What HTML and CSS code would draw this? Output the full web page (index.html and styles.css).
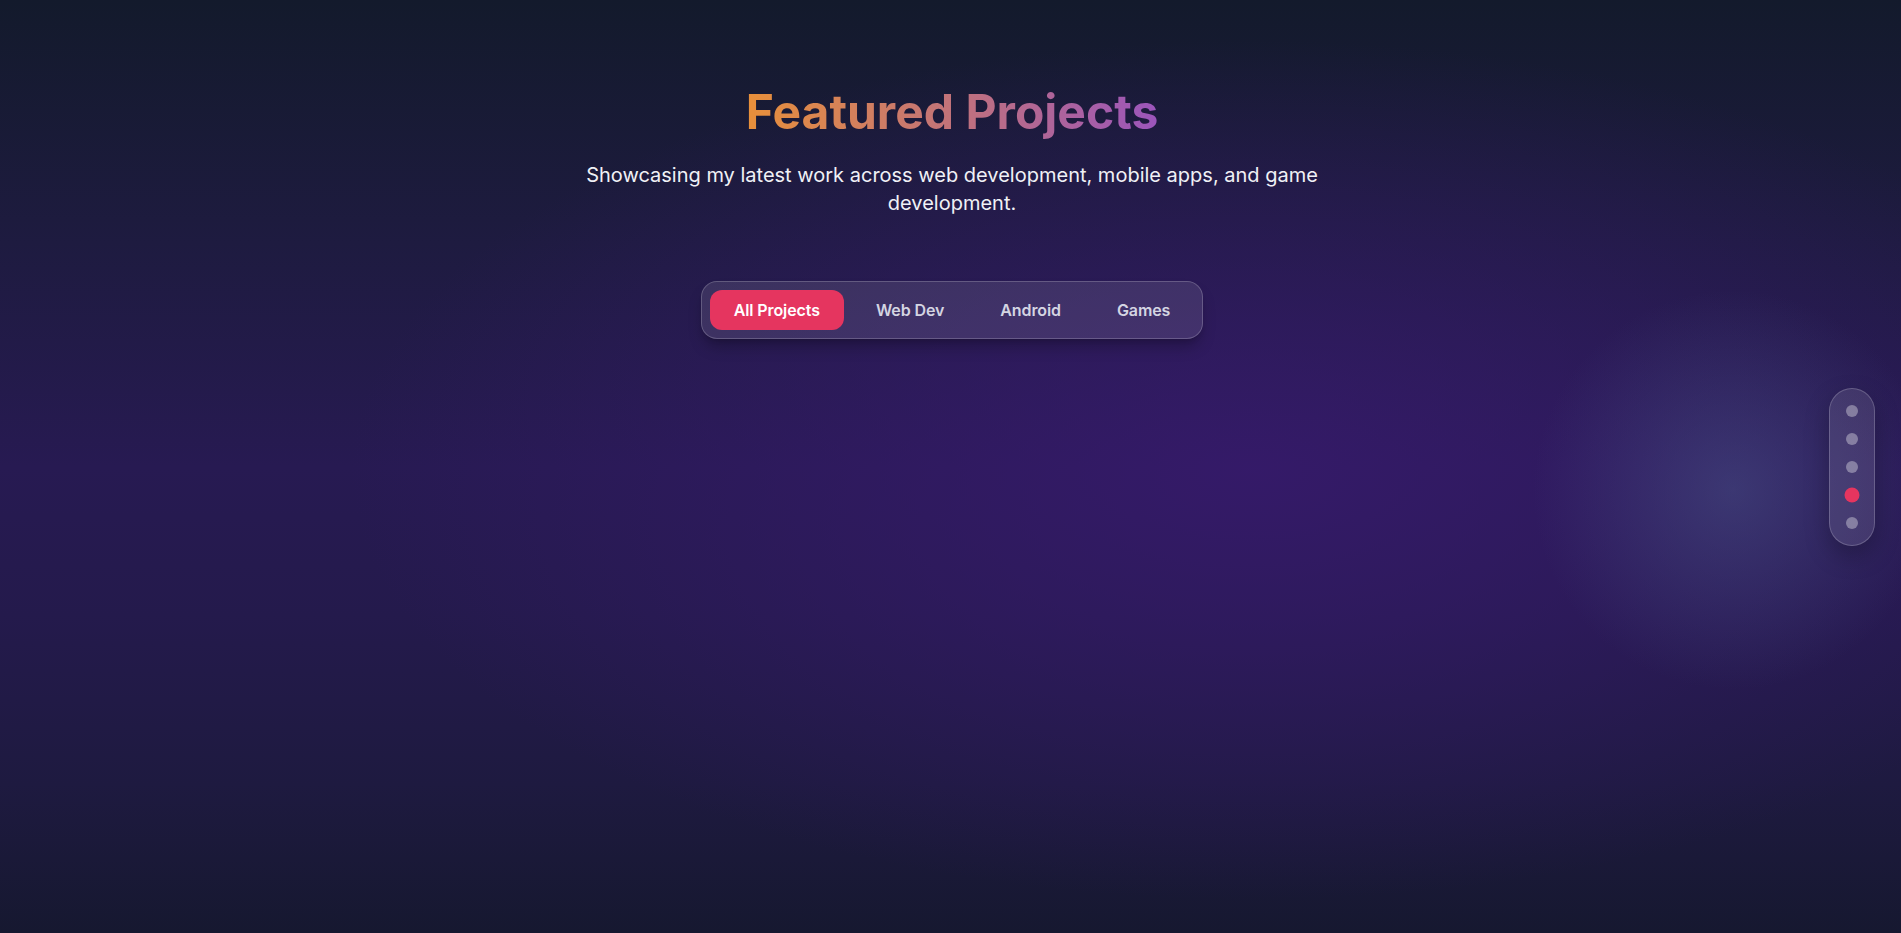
FILE: index.html
```html
<!DOCTYPE html>
<html lang="en">
<head>
<meta charset="utf-8">
<title>Featured Projects</title>
<link rel="stylesheet" href="styles.css">
</head>
<body>
<div class="glow"></div>
<main class="projects">
  <header class="projects-header">
    <h1 class="title">Featured Projects</h1>
    <p class="subtitle">Showcasing my latest work across web development, mobile apps, and game development.</p>
  </header>
  <nav class="filters">
    <button class="filter active">All Projects</button>
    <button class="filter">Web Dev</button>
    <button class="filter">Android</button>
    <button class="filter">Games</button>
  </nav>
</main>
<aside class="side-nav">
  <span class="dot"></span>
  <span class="dot"></span>
  <span class="dot"></span>
  <span class="dot current"></span>
  <span class="dot"></span>
</aside>
</body>
</html>
```
FILE: styles.css
```css
* { box-sizing: border-box; }
html, body { margin: 0; padding: 0; }
body {
  min-height: 100vh;
  height: 933px;
  overflow: hidden;
  font-family: Inter, "Noto Sans", sans-serif;
  color: #fff;
  background:
    radial-gradient(ellipse 900px 430px at 1250px 470px, rgba(56, 26, 110, 0.8), rgba(56, 26, 110, 0) 100%),
    linear-gradient(to bottom, #131a2c 0%, #1e1b40 26%, #271a52 50%, #241a4c 66%, #1e1a40 84%, #161830 100%);
  position: relative;
}
.glow {
  position: absolute;
  inset: 0;
  pointer-events: none;
  background: radial-gradient(circle 200px at 1733px 490px, rgba(80, 96, 146, 0.42), rgba(80, 96, 146, 0) 100%);
}
.projects {
  position: relative;
  display: flex;
  flex-direction: column;
  align-items: center;
  padding-top: 83px;
  padding-left: 3px;
}
.projects-header {
  display: flex;
  flex-direction: column;
  align-items: center;
  text-align: center;
}
.title {
  margin: 0;
  font-size: 48px;
  line-height: 57.6px;
  font-weight: 700;
  background: linear-gradient(to right, #e8903a, #9b55bb);
  -webkit-background-clip: text;
  background-clip: text;
  color: transparent;
}
.subtitle {
  margin: 20px 0 0;
  max-width: 768px;
  font-size: 20px;
  line-height: 28px;
  color: #f0f1f6;
}
.filters {
  margin-top: 64px;
  display: flex;
  gap: 8px;
  padding: 8px;
  border-radius: 16px;
  background: rgba(255, 255, 255, 0.1);
  border: 1px solid rgba(255, 255, 255, 0.2);
  box-shadow: 0 10px 15px -3px rgba(0, 0, 0, 0.25), 0 4px 6px -4px rgba(0, 0, 0, 0.2);
}
.filter {
  font-family: inherit;
  font-size: 16px;
  line-height: 24px;
  font-weight: 600;
  letter-spacing: -0.1px;
  padding: 8px 24px;
  border: 0;
  border-radius: 12px;
  background: transparent;
  color: #d4d5e2;
}
.filter.active {
  background: #e5355f;
  color: #fff;
}
.side-nav {
  position: absolute;
  right: 26px;
  top: 50%;
  transform: translateY(-50%);
  display: flex;
  flex-direction: column;
  align-items: center;
  gap: 16px;
  padding: 16px;
  border-radius: 9999px;
  background: rgba(255, 255, 255, 0.1);
  border: 1px solid rgba(255, 255, 255, 0.2);
  box-shadow: 0 10px 25px rgba(0, 0, 0, 0.25);
}
.dot {
  width: 12px;
  height: 12px;
  border-radius: 50%;
  background: rgba(255, 255, 255, 0.35);
}
.dot.current {
  background: #e5355f;
  transform: scale(1.25);
}
```
